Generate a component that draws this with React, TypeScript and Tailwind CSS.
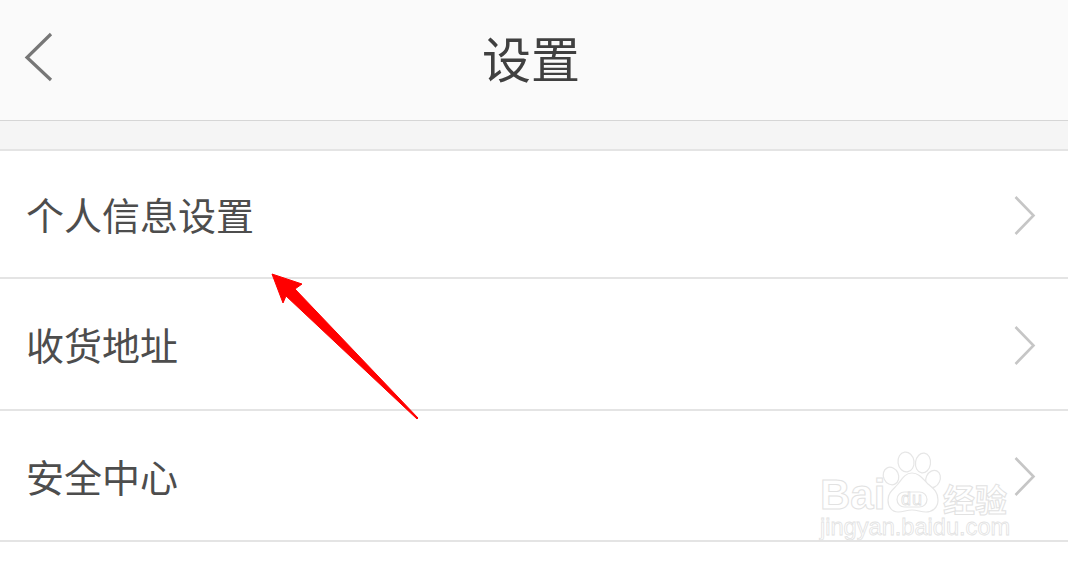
const font = "font-['Noto_Sans_CJK_SC','Noto_Sans',sans-serif]";

function Chevron() {
  return (
    <svg width="24" height="42" viewBox="0 0 24 42" fill="none" className="shrink-0 mt-[3px]">
      <path d="M2.5 2 L20.5 20.5 L2.5 39" stroke="#c6c6c6" strokeWidth="2.6" />
    </svg>
  );
}

function Row({ label, className }: { label: string; className: string }) {
  return (
    <div className={`flex items-center justify-between pl-[26px] pr-[31px] bg-white border-b-2 border-[#e4e4e4] ${className}`}>
      <span className="text-[38px] leading-none text-[#4d4d4d]">{label}</span>
      <Chevron />
    </div>
  );
}

function Paw() {
  return (
    <svg width="52" height="62" viewBox="0 0 52 62" fill="#ffffff" stroke="#e6e6e6" strokeWidth="1.2" className="shrink-0 overflow-visible mb-[3px]">
      <ellipse cx="20" cy="11" rx="8" ry="10" transform="rotate(-8 20 11)" />
      <ellipse cx="37" cy="12" rx="7.5" ry="10" transform="rotate(8 37 12)" />
      <ellipse cx="5" cy="25" rx="7.5" ry="9" transform="rotate(-25 5 25)" />
      <ellipse cx="47" cy="28" rx="7" ry="9" transform="rotate(25 47 28)" />
      <path d="M26 22 C33 22 37 28 42 33 C48 38 52 41 52 49 C52 57 46 61 40 61 C34 61 32 59 26 59 C20 59 18 61 12 61 C6 61 2 56 2 49 C2 41 8 38 12 33 C16 28 19 22 26 22 Z" />
      <rect x="11" y="41" width="30" height="15" rx="7.5" />
      <text x="26" y="54" fontSize="18" textAnchor="middle" letterSpacing="1" strokeWidth="0.8" fill="#ffffff" stroke="#e0e0e0" fontFamily="'Liberation Sans', sans-serif">du</text>
    </svg>
  );
}

function Watermark() {
  return (
    <div className="absolute left-[820px] top-[451px] w-[192px] flex flex-col font-['Liberation_Sans',sans-serif]">
      <div className="flex items-end">
        <span className="w-[66px] text-[42px] leading-none font-bold text-white [-webkit-text-stroke:1px_#e2e2e2]">Bai</span>
        <Paw />
        <span className={`ml-[5px] mb-[2px] text-[32px] leading-none font-bold whitespace-nowrap text-white [-webkit-text-stroke:1px_#e2e2e2] ${font}`}>经验</span>
      </div>
      <span className="text-[23.6px] leading-none text-white [-webkit-text-stroke:0.8px_#e2e2e2] whitespace-nowrap">jingyan.baidu.com</span>
    </div>
  );
}

function Arrow() {
  return (
    <svg width="150" height="150" viewBox="0 0 150 150" className="absolute left-[270px] top-[272px]">
      <path d="M2 2 L32 12 L25 17 L148 146 L147 147 L16 24 L13 31 Z" fill="#ff0000" stroke="#ff0000" strokeWidth="1" strokeLinejoin="round" />
    </svg>
  );
}

export default function App() {
  return (
    <div className={`relative w-[1068px] h-[566px] overflow-hidden bg-white ${font}`}>
      <header className="relative flex items-center justify-center h-[121px] bg-[#fafafa] border-b border-[#d6d6d6]">
        <svg width="30" height="52" viewBox="0 0 30 52" fill="none" className="absolute left-[24px] top-[32px]">
          <path d="M27 2 L3 25.5 L27 48" stroke="#777777" strokeWidth="3.2" />
        </svg>
        <h1 className="text-[49px] leading-none font-normal text-[#404040] mr-[6px] mb-[7px]">设置</h1>
      </header>
      <div className="h-[28px] bg-[#f5f5f5]" />
      <div className="h-[2px] bg-[#e4e4e4]" />
      <Row label="个人信息设置" className="h-[128px]" />
      <Row label="收货地址" className="h-[132px]" />
      <Row label="安全中心" className="h-[131px]" />
      <Watermark />
      <Arrow />
    </div>
  );
}
